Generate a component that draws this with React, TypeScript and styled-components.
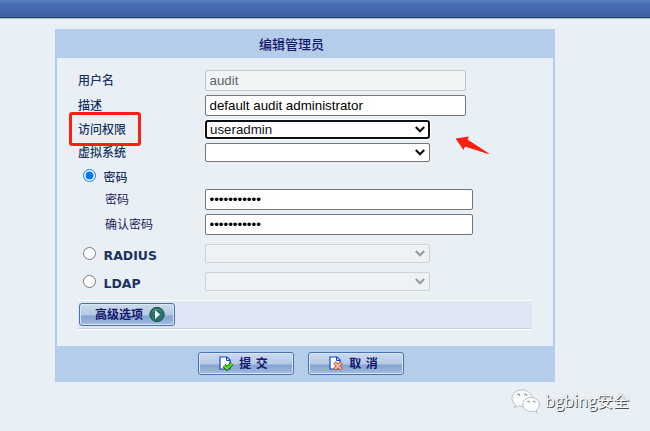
import React from "react";
import styled, { createGlobalStyle } from "styled-components";

const GlobalStyle = createGlobalStyle`
  * { box-sizing: border-box; }
  body {
    margin: 0;
    background: #e8f0f6;
    font-family: "Liberation Sans", "Noto Sans CJK SC", sans-serif;
  }
`;

const Page = styled.div`
  position: relative;
  height: 431px;
  overflow: hidden;
  display: flex;
  flex-direction: column;
  background: #e8f0f6;
`;

const TopBar = styled.header`
  height: 19px;
  flex: none;
  background: linear-gradient(#5580bf 0, #436db0 5px, #4368ae 9px, #3e609f 17px);
  border-bottom: 1px solid #a9bdcc;
  box-shadow: inset 0 -1px 0 #203f63;
`;

const Panel = styled.form`
  width: 500px;
  height: 353px;
  flex: none;
  margin: 10px 0 0 55px;
  background: #b4cdeb;
  display: flex;
  flex-direction: column;
`;

const Title = styled.h1`
  margin: 0;
  height: 29px;
  padding-right: 27px;
  font: 500 13px/29px "Noto Sans CJK SC", sans-serif;
  text-align: center;
  color: #17196b;
`;

const Body = styled.div`
  height: 288px;
  margin: 0 2px;
  padding: 12px 21px 0;
  background: #e8f0f6;
  display: flex;
  flex-direction: column;
  gap: 4px;
`;

const Row = styled.div<{ $h?: number; $gap?: number }>`
  height: ${(p) => p.$h ?? 21}px;
  flex: none;
  margin-top: ${(p) => p.$gap ?? 0}px;
  display: flex;
  align-items: center;
`;

const Label = styled.label<{ $sub?: boolean }>`
  width: 127px;
  padding: 0 0 2px ${(p) => (p.$sub ? 27 : 0)}px;
  font: ${(p) => (p.$sub ? 400 : 500)} 12px/18px "Noto Sans CJK SC", sans-serif;
  color: ${(p) => (p.$sub ? "#1d2358" : "#1d3260")};
`;

const RadioLabel = styled.label`
  width: 127px;
  padding-left: 5px;
  display: flex;
  align-items: center;
  font: bold 12.5px/18px "DejaVu Sans", "Noto Sans CJK SC", sans-serif;
  color: #1d3260;
  span { padding-top: 4px; }
  span:lang(zh) { font: 500 12px/18px "Noto Sans CJK SC", sans-serif; padding-top: 2px; }
`;

const Radio = styled.input.attrs({ type: "radio" })`
  margin: 0 7.5px 0 0;
  width: 13px;
  height: 13px;
  accent-color: #0075ff;
`;

const Field = styled.input<{ $w?: number }>`
  width: ${(p) => p.$w ?? 261}px;
  height: 21px;
  margin: 0;
  padding: 1px 3.5px;
  border: 1px solid #767676;
  border-radius: 2px;
  background: #fff;
  color: #000;
  font: 13.33px/17px "Liberation Sans", sans-serif;
  outline: none;
  &:disabled {
    background: #f0f4f5;
    border-color: #c3c7c9;
    color: #636566;
  }
`;

const SelectBox = styled.div<{ $focused?: boolean; $disabled?: boolean }>`
  width: 225px;
  height: 19px;
  display: flex;
  align-items: center;
  justify-content: space-between;
  padding: 0 ${(p) => (p.$focused ? "3px 0 3px" : "4px 0 4px")};
  border: ${(p) => (p.$focused ? "2px solid #101010" : p.$disabled ? "1px solid #ced3d6" : "1px solid #767676")};
  border-radius: ${(p) => (p.$focused ? 3 : 2)}px;
  box-shadow: ${(p) => (p.$focused ? "0 0 0 1px #fff" : "none")};
  background: ${(p) => (p.$disabled ? "#eef2f4" : "#fff")};
  color: ${(p) => (p.$disabled ? "#999da0" : "#101010")};
  font: 13.33px/15px "Liberation Sans", sans-serif;
`;

const Strip = styled.div`
  height: 30px;
  flex: none;
  margin-top: 5px;
  width: 454px;
  padding: 2px 1px;
  border-top: 1px solid #fff;
  border-bottom: 1px solid #fff;
  box-shadow: inset 0 -1px 0 #c2d5e1;
  background: #dfe6f3;
`;

const Button = styled.button<{ $action?: boolean }>`
  width: 96px;
  height: 23px;
  padding: 0 ${(p) => (p.$action ? 5 : 0)}px 0 0;
  display: flex;
  align-items: center;
  justify-content: center;
  border: 1px solid #4872b3;
  border-radius: 3px;
  background: linear-gradient(#cbdaed 0, #b5c9e5 11px, #83a4d2 12px, #93b0d8 17px, #a7c0e1 100%);
  box-shadow: inset 0 0 0 1px #dbe6f4;
  color: #14176b;
  font: 700 12px/18px "Noto Sans CJK SC", sans-serif;
  white-space: pre;
`;

const AdvancedLabel = styled.span`
  margin: 0 6px 0 6px;
  padding-bottom: 1px;
`;

const ActionLabel = styled.span`
  margin-left: 6px;
  padding-bottom: 1px;
  word-spacing: 2px;
`;

const Footer = styled.footer`
  height: 36px;
  padding: 6px 0 0 143px;
  display: flex;
  gap: 14px;
`;

const Highlight = styled.div`
  position: absolute;
  left: 69px;
  top: 112px;
  width: 72px;
  height: 34px;
  border: 3px solid #ff1f12;
  border-radius: 3px;
`;

const Pointer = styled.svg`
  position: absolute;
  left: 454px;
  top: 135px;
`;

const Watermark = styled.div`
  position: absolute;
  left: 511px;
  top: 387px;
  display: flex;
  align-items: center;
  gap: 5px;
  font: 400 16px/26px "Noto Sans CJK SC", sans-serif;
  color: #fff;
  text-shadow: 1px 1px 0 #4b4f52, 0 0 1px #999;
  span { padding-bottom: 3px; }
`;

function Chevron() {
  return (
    <svg width="10" height="7" viewBox="0 0 10 7" fill="none" stroke="currentColor" strokeWidth="2.2">
      <path d="M.8 1l4.200 4.200 4.200-4.200" />
    </svg>
  );
}

function Select({ value = "", focused, disabled }: { value?: string; focused?: boolean; disabled?: boolean }) {
  return (
    <SelectBox role="combobox" $focused={focused} $disabled={disabled}>
      <span>{value}</span>
      <Chevron />
    </SelectBox>
  );
}

function DocIcon({ kind }: { kind: "ok" | "cancel" }) {
  return (
    <svg width="14" height="15" viewBox="0 0 14 15" fill="none">
      <path d="M1 1h7l3 3v9H1z" fill="#fff" stroke="#1440d0" strokeWidth="1.2" />
      <path d="M7.5 1v3.5H11" stroke="#1440d0" />
      {kind === "ok" ? (
        <>
          <path d="M5 9.5L8 12.5L13 7.5" stroke="#174d19" strokeWidth="4" />
          <path d="M5 9.5L8 12.5L13 7.5" stroke="#54dc24" strokeWidth="2.6" />
        </>
      ) : (
        <>
          <path d="M5.5 6.5l7 7m0-7l-7 7" stroke="#b64c38" strokeWidth="3.6" />
          <path d="M6 7l6 6m0-6l-6 6" stroke="#f5b49d" strokeWidth="2.2" />
        </>
      )}
    </svg>
  );
}

function PlayIcon() {
  return (
    <svg width="16" height="16" viewBox="0 0 16 16">
      <circle cx="8" cy="7.500" r="7.2" fill="#237569" stroke="#234b4a" strokeWidth="1" />
      <path d="M3 5a6 6 0 0 1 10 0" fill="none" stroke="#4a9484" />
      <path d="M6 3L11 7.500l-5 4.500z" fill="#fff" />
    </svg>
  );
}

function ChatIcon() {
  return (
    <svg width="29" height="27" viewBox="0 0 29 27" fill="#fafcfd" stroke="#a3a8ab" strokeWidth=".7">
      <path d="M11 2C5.500 2 1 5.600 1 10.200c0 2.600 1.400 4.800 3.600 6.300L3.500 19.700l3.900-2c1.100.4 2.300.6 3.600.6 5.500 0 10-3.600 10-8.100S16.500 2 11 2z" />
      <path d="M20 9.500c-4.600 0-8.300 3.100-8.300 7s3.700 7 8.300 7c1 0 2-.2 2.900-.5l3.200 1.700-.8-2.800c1.900-1.300 3-3.200 3-5.400 0-3.900-3.700-7-8.300-7z" />
      <g fill="none" stroke="#74797c" strokeWidth="1">
        <path d="M6.200 6.800a1.300 1.300 0 0 1 2.500 1.100" />
        <path d="M13.200 6.800a1.300 1.300 0 0 1 2.500 1.100" />
        <path d="M16.400 13.800a1 1 0 0 1 2 .8" />
        <path d="M21.900 13.800a1 1 0 0 1 2 .8" />
      </g>
    </svg>
  );
}

export default function App() {
  return (
    <Page>
      <GlobalStyle />
      <TopBar />
      <Panel>
        <Title>编辑管理员</Title>
        <Body>
          <Row>
            <Label>用户名</Label>
            <Field defaultValue="audit" disabled />
          </Row>
          <Row>
            <Label>描述</Label>
            <Field defaultValue="default audit administrator" />
          </Row>
          <Row $h={19}>
            <Label>访问权限</Label>
            <Select value="useradmin" focused />
          </Row>
          <Row $h={19}>
            <Label>虚拟系统</Label>
            <Select />
          </Row>
          <Row $h={19}>
            <RadioLabel>
              <Radio name="auth" defaultChecked />
              <span lang="zh">密码</span>
            </RadioLabel>
          </Row>
          <Row>
            <Label $sub>密码</Label>
            <Field type="password" defaultValue="adminaudit1" $w={268} />
          </Row>
          <Row>
            <Label $sub>确认密码</Label>
            <Field type="password" defaultValue="adminaudit1" $w={268} />
          </Row>
          <Row $h={19} $gap={5}>
            <RadioLabel>
              <Radio name="auth" />
              <span>RADIUS</span>
            </RadioLabel>
            <Select disabled />
          </Row>
          <Row $h={19} $gap={5}>
            <RadioLabel>
              <Radio name="auth" />
              <span>LDAP</span>
            </RadioLabel>
            <Select disabled />
          </Row>
          <Strip>
            <Button type="button">
              <AdvancedLabel>高级选项</AdvancedLabel>
              <PlayIcon />
            </Button>
          </Strip>
        </Body>
        <Footer>
          <Button type="button" $action>
            <DocIcon kind="ok" />
            <ActionLabel>提 交</ActionLabel>
          </Button>
          <Button type="button" $action>
            <DocIcon kind="cancel" />
            <ActionLabel>取 消</ActionLabel>
          </Button>
        </Footer>
      </Panel>
      <Highlight />
      <Pointer width="36" height="20" viewBox="0 0 36 20">
        <path d="M1.500 3.500L15 1.500l-1.500 3L35 18.500l-1 .5-23-7.500L9.500 15z" fill="#ff1f12" />
      </Pointer>
      <Watermark>
        <ChatIcon />
        <span>bgbing安全</span>
      </Watermark>
    </Page>
  );
}
